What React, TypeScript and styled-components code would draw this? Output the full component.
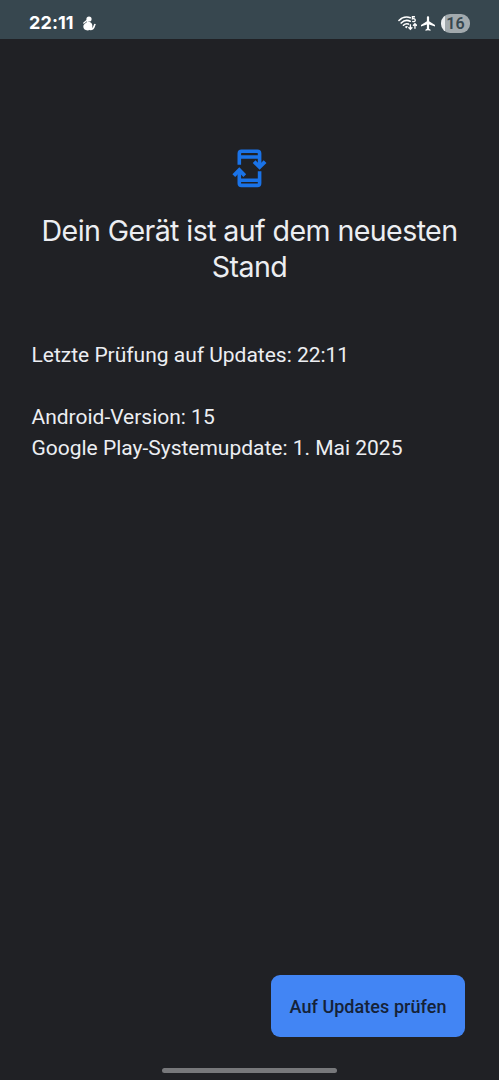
import React from "react";
import styled, { createGlobalStyle } from "styled-components";

const GlobalStyle = createGlobalStyle`
  * { box-sizing: border-box; }
  body { margin: 0; background: #202125; }
`;

const Screen = styled.div`
  display: flex;
  flex-direction: column;
  width: 100%;
  height: 1080px;
  overflow: hidden;
  background: #202125;
  color: #eceef2;
  font-family: Roboto, sans-serif;
`;

const StatusBar = styled.header`
  display: flex;
  align-items: center;
  height: 39px;
  padding: 7px 29px 0 29px;
  background: #37474f;
  color: #fff;
`;

const Clock = styled.span`
  width: 53px;
  font: 700 18px/22px Inter, sans-serif;
  letter-spacing: 0.1px;
  white-space: nowrap;
`;

const StatusIcons = styled.div`
  display: flex;
  align-items: center;
  gap: 4px;
  margin-left: auto;
`;

const Battery = styled.span`
  width: 29px;
  height: 19px;
  margin-left: 2px;
  border-radius: 9px;
  background: linear-gradient(to right, #e9ecee 0 4px, #a2aaae 4px);
  color: #37474f;
  font: 600 16px/19px Roboto, sans-serif;
  text-align: center;
`;

const Main = styled.main`
  display: flex;
  flex: 1;
  flex-direction: column;
  padding: 109px 31.5px 0;
`;

const UpdateIcon = styled.svg`
  align-self: center;
  flex: none;
`;

const Title = styled.h1`
  margin: 25px -20px 0;
  font: 400 28.6px/36px Inter, sans-serif;
  letter-spacing: -0.6px;
  text-align: center;
`;

const Details = styled.section`
  margin-top: 55px;
  font-size: 21px;
  line-height: 31px;
  letter-spacing: -0.01px;
`;

const Line = styled.p`
  margin: 0;
  white-space: nowrap;

  & + &:nth-child(2) { margin-top: 31px; }
`;

const Footer = styled.footer`
  display: flex;
  flex-direction: column;
  align-items: center;
  height: 105px;
`;

const CheckButton = styled.button`
  align-self: flex-end;
  width: 194px;
  height: 62px;
  margin-right: 34px;
  padding: 2px 0 0;
  border: 0;
  border-radius: 9px;
  background: #4285f4;
  color: #152238;
  font: 500 18px/24px Roboto, sans-serif;
  letter-spacing: 0.05px;
  white-space: nowrap;
`;

const HomeHandle = styled.div`
  width: 175px;
  height: 5px;
  margin-top: 31px;
  border-radius: 3px;
  background: #77787b;
`;

const App = () => (
  <>
    <GlobalStyle />
    <Screen>
      <StatusBar>
        <Clock>22:11</Clock>
        <svg width="14" height="15" viewBox="0 0 14 15" fill="#fff">
          <circle cx="7" cy="3" r="2.6" />
          <path d="M5 4.5C6.5 6 10.3 5.8 10.4 10c0 2.9-1.6 4.4-4.7 4.4s-4.4-1.7-4.4-4.1C1.3 8 3.4 7.4 4.8 6.2z" />
          <path d="M1.8 7l3-2.6" fill="none" stroke="#fff" strokeWidth="1.3" strokeLinecap="round" />
          <path d="M8.5 13.4c4.2-.3 3.2-3.4 4.4-4.9" fill="none" stroke="#fff" strokeWidth="1.6" strokeLinecap="round" />
        </svg>
        <StatusIcons>
          <svg width="19" height="16" viewBox="0 0 19.5 16" fill="none" stroke="#fff">
            <path d="M1 5.4C4 2.2 8.8 1.1 12.6 2.6M3.3 8c2.4-2.5 6.2-3.3 9.2-1.9M5.6 10.3c1.3-1.3 3.3-1.9 5.1-1.2" strokeWidth="1.7" strokeLinecap="round" />
            <path d="M7 12.2c.8-1 1.9-1.2 3-.8l-1.2 2.2z" fill="#fff" stroke="none" />
            <path d="M17.4 1.6h-2.6v2.1c1.6-.4 2.9.1 2.9 1.4 0 1.5-1.7 1.9-3 1.1" strokeWidth="1.4" />
            <path d="M12.7 9.2v5.2m-2-2 2 2 2-2M17.4 14V8.8m-2 2 2-2 2 2" strokeWidth="1.4" />
          </svg>
          <svg width="14" height="15" viewBox="2 2 19 20" fill="#fff">
            <path d="M21 16v-2l-8-5V3.5C13 2.67 12.33 2 11.5 2S10 2.67 10 3.5V9l-8 5v2l8-2.5V19l-2 1.5V22l3.5-1 3.5 1v-1.5L13 19v-5.5l8 2.5z" />
          </svg>
          <Battery>16</Battery>
        </StatusIcons>
      </StatusBar>
      <Main>
        <UpdateIcon width="36" height="40" viewBox="0.7 0 36 40" fill="none" stroke="#1a73e8" strokeWidth="3.6">
          <path d="M8 16.7V5.4c0-1.5.8-2.2 2.2-2.2h15.9c1.4 0 2.2.7 2.2 2.2V19M8 9h20.3" />
          <path d="M8 22v13.2c0 1.5.8 2.2 2.2 2.2h15.9c1.4 0 2.2-.7 2.2-2.2V23.3M8 32.2h20.3" />
          <path d="m2.5 27.6 5.5-5.5 5.5 5.5M22.8 13.6l5.5 5.5 5.5-5.5" strokeWidth="3.9" />
        </UpdateIcon>
        <Title>Dein Gerät ist auf dem neuesten<br />Stand</Title>
        <Details>
          <Line>Letzte Prüfung auf Updates: 22:11</Line>
          <Line>Android-Version: 15</Line>
          <Line>Google Play-Systemupdate: 1. Mai 2025</Line>
        </Details>
      </Main>
      <Footer>
        <CheckButton>Auf Updates prüfen</CheckButton>
        <HomeHandle />
      </Footer>
    </Screen>
  </>
);

export default App;
